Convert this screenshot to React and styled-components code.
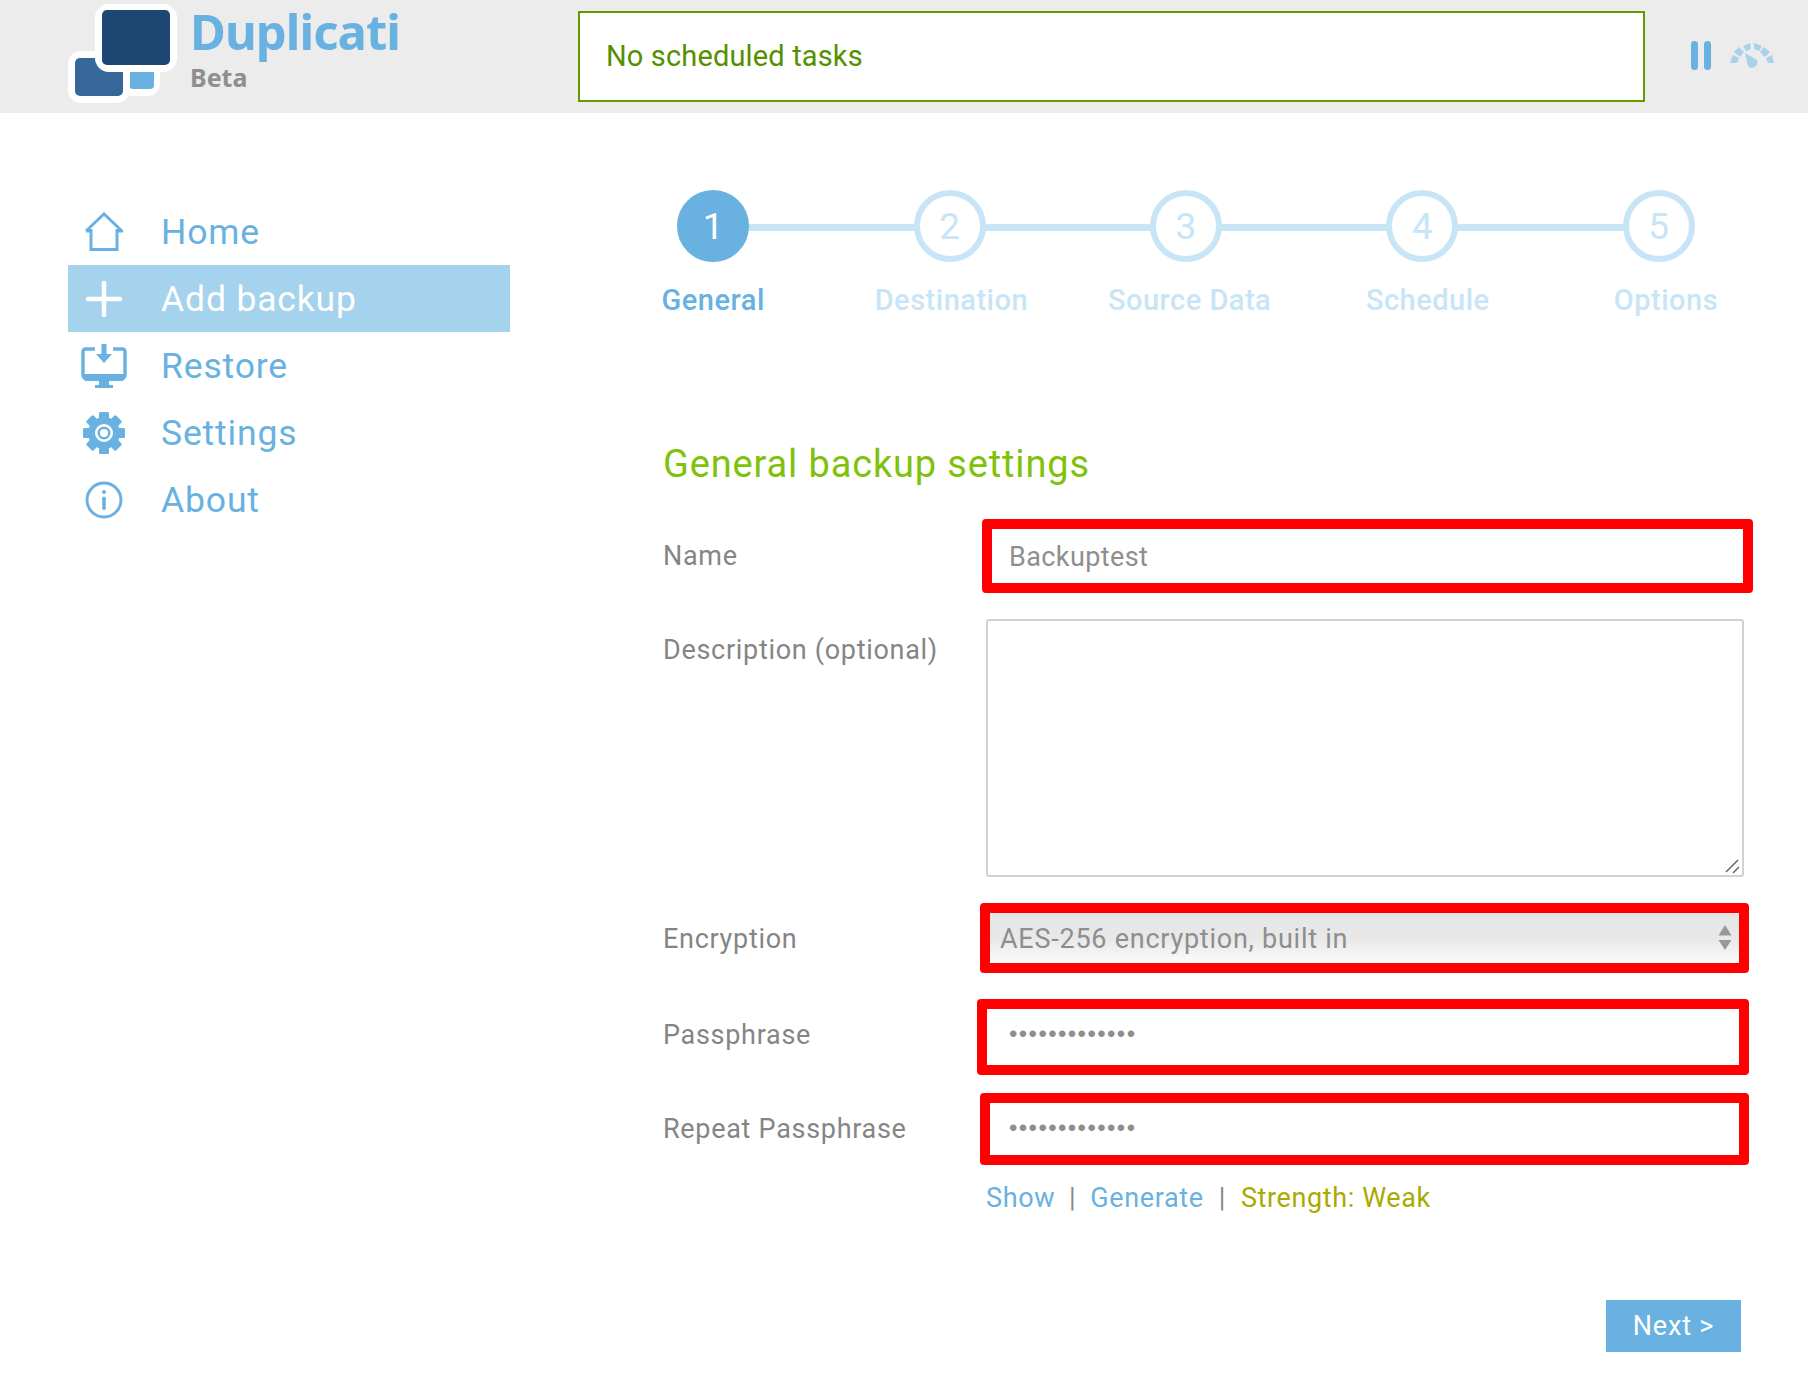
import React from 'react';
import styled, { createGlobalStyle } from 'styled-components';

const Global = createGlobalStyle`
  html, body { margin: 0; padding: 0; background: #fff; }
  body { font-family: Roboto, "Noto Sans", sans-serif; color: #888; }
`;
const Page = styled.div`width: 1808px; height: 1398px; overflow: hidden; display: flex; flex-direction: column;`;
const Header = styled.header`height: 113px; background: #ececec; display: flex; align-items: flex-start; flex: none;`;
const LogoWrap = styled.div`width: 578px; height: 113px; padding: 4px 0 0 68px; display: flex; align-items: flex-start; box-sizing: border-box;`;
const Brand = styled.div`margin-left: 13px; display: flex; flex-direction: column; font-family: "Noto Sans", sans-serif; font-weight: 700;`;
const BrandName = styled.div`font-size: 49px; line-height: 50px; margin-top: 2px; letter-spacing: -.95px; color: #68b1e0;`;
const BrandBeta = styled.div`font-size: 25px; line-height: 30px; margin-top: 6px; color: #8f8f8f;`;
const Status = styled.div`width: 1067px; height: 91px; margin-top: 11px; box-sizing: border-box; border: 2px solid #669900; background: #fff; color: #559000; font-size: 29px; letter-spacing: .15px; line-height: 86px; padding-left: 26px;`;
const Controls = styled.div`display: flex; align-items: center; height: 110px; margin-left: 46px; gap: 19px;`;
const Body = styled.div`flex: 1; display: flex;`;
const Nav = styled.nav`width: 442px; margin-left: 68px; padding-top: 85px; flex: none;`;
const NavItem = styled.a`height: 67px; display: flex; align-items: center; background: ${p => p.$active ? '#a5d2ec' : 'transparent'}; color: ${p => p.$active ? '#fff' : '#68b1e0'}; font-size: 35.5px; letter-spacing: .85px;`;
const NavIcon = styled.span`width: 72px; height: 67px; display: flex; align-items: center; justify-content: center; margin-right: 21px; flex: none;`;
const Main = styled.main`margin-left: 153px; width: 1100px; flex: none; padding-top: 77px;`;
const Steps = styled.div`display: flex; width: 1060px; margin-left: -68px;`;
const Step = styled.div`position: relative; width: 236.4px; flex: none; display: flex; flex-direction: column; align-items: center;`;
const Circle = styled.div`width: 72px; height: 72px; box-sizing: border-box; border-radius: 50%; border: 6px solid ${p => p.$active ? '#68b1e0' : '#c8e4f7'}; background: ${p => p.$active ? '#68b1e0' : '#fff'}; color: ${p => p.$active ? '#fff' : '#c8e4f7'}; font-size: 37px; font-weight: 400; display: flex; align-items: center; justify-content: center; z-index: 1;`;
const StepLine = styled.div`position: absolute; top: 34px; left: 150px; width: 170px; height: 7px; background: #c8e4f7;`;
const StepLabel = styled.div`margin: 20px 0 0 ${p => p.$shift}px; font-size: 29px; line-height: 36px; font-weight: 500; letter-spacing: .5px; white-space: nowrap; color: ${p => p.$active ? '#68b1e0' : '#c8e4f7'};`;
const Title = styled.h2`margin: 122px 0 0; font-size: 38px; line-height: 48px; font-weight: 400; letter-spacing: .85px; color: #7fc20c;`;
const Row = styled.div`display: flex; align-items: ${p => p.$top ? 'flex-start' : 'center'}; margin-top: ${p => p.$mt}px; height: ${p => p.$h}px;`;
const Label = styled.label`width: 319px; flex: none; margin-right: ${p => p.$gap}px; font-size: 27px; font-weight: 400; letter-spacing: .7px; color: #858585; padding-top: ${p => p.$pt || 0}px; margin-bottom: ${p => p.$mb || 0}px;`;
const Flagged = styled.div`box-sizing: border-box; width: ${p => p.$w}px; height: ${p => p.$h}px; border: 10px solid #ff0000; border-radius: 4px; background: ${p => p.$select ? 'linear-gradient(#e6e6e6, #e8e8e8 50%, #fbfbfb)' : '#fff'}; display: flex; align-items: center; justify-content: space-between; color: #8e8e8e; font-size: 27px; letter-spacing: .75px;`;
const Area = styled.div`position: relative; box-sizing: border-box; width: 758px; height: 258px; border: 2px solid #d2d2d2; border-radius: 3px; background: #fff;`;
const Grip = styled.svg`position: absolute; right: 1px; bottom: 1px;`;
const Dots = styled.span`display: block; font-size: 24px; line-height: 24px; letter-spacing: 1.4px; margin-bottom: ${p => p.$mb}px; color: #8e8e8e; font-family: "Liberation Sans", sans-serif;`;
const Links = styled.div`display: flex; margin: 15px 0 0 323px; font-size: 27px; letter-spacing: .62px; align-items: center; line-height: 36px;`;
const LinkText = styled.a`color: ${p => p.$warn ? '#aaaa00' : '#68b1e0'};`;
const Sep = styled.span`color: #888; margin: 0 ${p => p.$m || 14}px;`;
const Footer = styled.div`margin-top: 84px; margin-left: 943px;`;
const NextBtn = styled.button`width: 135px; height: 52px; border: 0; padding: 0; background: #68b1e0; color: #fff; font: 400 27px Roboto, sans-serif; letter-spacing: .8px;`;
const TextPad = styled.span`padding: ${p => p.$t || 0}px 0 0 ${p => p.$l}px; letter-spacing: ${p => p.$ls || '.75px'};`;

const Logo = () => (
  <svg width="109" height="100" viewBox="0 0 109 100">
    <rect x="50" y="56" width="42" height="36" rx="12" fill="#fff" />
    <rect x="61" y="56" width="25" height="29" rx="4" fill="#68b1e0" />
    <rect x="0" y="47" width="62" height="52" rx="13" fill="#fff" />
    <rect x="7" y="54" width="48" height="38" rx="5" fill="#356898" />
    <rect x="27" y="0" width="82" height="68" rx="14" fill="#fff" />
    <rect x="34" y="6" width="68" height="55" rx="5" fill="#1c4773" />
  </svg>
);
const Pause = () => (
  <svg width="20" height="29" viewBox="0 0 20 29"><rect x="0" y="0" width="7" height="29" rx="3.5" fill="#68b1e0" /><rect x="13" y="0" width="7" height="29" rx="3.5" fill="#68b1e0" /></svg>
);
const Gauge = () => (
  <svg width="45" height="25" viewBox="0 0 45 25" fill="#a9d2ea">
    <path d="M0 20 L7 20 L9 15 L3 12 Z" />
    <path d="M4 9 L10 14 L14 9 L9 4 Z" />
    <path d="M13 3 L16 8 L21 6 L20 0 Z" />
    <path d="M24 0 L24 6 L29 8 L32 3 Z" />
    <path d="M34 4 L30 9 L35 14 L40 9 Z" />
    <path d="M42 12 L36 15 L38 20 L44 20 Z" />
    <path d="M15 10 L27 17 A5.5 5.5 0 0 1 18 23 Z" />
  </svg>
);
const ic = { fill: 'none', stroke: '#68b1e0', strokeWidth: 3 };
const HomeIcon = () => <svg width="38" height="40" viewBox="0 0 38 40" {...ic}><path d="M1 19 L19 2 L37 19 H33 M5 19 H1 M6 17 V37.5 H32 V17" /></svg>;
const PlusIcon = () => <svg width="36" height="36" viewBox="0 0 36 36" stroke="#fff" strokeWidth="4.500" strokeLinecap="round"><path d="M18 2V34M2 18H34" /></svg>;
const RestoreIcon = () => (
  <svg width="46" height="44" viewBox="0 0 46 44"><path d="M14 5H4.500a2.500 2.500 0 0 0-2.500 2.500V31a4 4 0 0 0 4 4h34a4 4 0 0 0 4-4V7.500a2.500 2.500 0 0 0-2.500-2.500H32" fill="none" stroke="#68b1e0" strokeWidth="3.500" /><path d="M2 30H44V33a4 4 0 0 1-4 4H6a4 4 0 0 1-4-4Z M18 37H28V41H32V44H14V41H18Z" fill="#68b1e0" /><path d="M20.500 0H25.500V10H31L23 19L15 10H20.500Z" fill="#68b1e0" /></svg>
);
const GearIcon = () => (
  <svg width="42" height="42" viewBox="0 0 42 42">
    <g fill="#68b1e0">{[0, 45, 90, 135, 180, 225, 270, 315].map(a => <rect key={a} x="16" y="0" width="10" height="10" rx="1.500" transform={`rotate(${a} 21 21)`} />)}</g>
    <circle cx="21" cy="21" r="16" fill="#68b1e0" />
    <circle cx="21" cy="21" r="9" fill="#fff" />
    <circle cx="21" cy="21" r="6.500" fill="#68b1e0" />
    <circle cx="21" cy="21" r="4" fill="#fff" />
  </svg>
);
const InfoIcon = () => (
  <svg width="38" height="38" viewBox="0 0 38 38"><circle cx="19" cy="19" r="17" fill="none" stroke="#68b1e0" strokeWidth="3" /><circle cx="19" cy="11" r="2" fill="#68b1e0" /><rect x="17.200" y="15.500" width="3.600" height="13.500" rx="1.800" fill="#68b1e0" /></svg>
);
const Arrows = () => <svg width="14" height="26" viewBox="0 0 14 26" fill="#999" style={{ marginRight: 7 }}><path d="M7 0L13.500 10.500H.5Z M.5 15H13.500L7 25Z" /></svg>;

const navItems = [
  ['Home', <HomeIcon />], ['Add backup', <PlusIcon />, true], ['Restore', <RestoreIcon />], ['Settings', <GearIcon />], ['About', <InfoIcon />],
];
const steps = ['General', 'Destination', 'Source Data', 'Schedule', 'Options'];

export default function App() {
  return (
    <Page>
      <Global />
      <Header>
        <LogoWrap><Logo /><Brand><BrandName>Duplicati</BrandName><BrandBeta>Beta</BrandBeta></Brand></LogoWrap>
        <Status>No scheduled tasks</Status>
        <Controls><Pause /><Gauge /></Controls>
      </Header>
      <Body>
        <Nav>
          {navItems.map(([t, icon, active]) => <NavItem key={t} $active={active}><NavIcon>{icon}</NavIcon>{t}</NavItem>)}
        </Nav>
        <Main>
          <Steps>
            {steps.map((s, i) => (
              <Step key={s}>
                <Circle $active={i === 0}>{i + 1}</Circle>
                {i < 4 && <StepLine />}
                <StepLabel $active={i === 0} $shift={i * 3.6}>{s}</StepLabel>
              </Step>
            ))}
          </Steps>
          <Title>General backup settings</Title>
          <Row $mt={31} $h={74}><Label $gap={0} $mb={1}>Name</Label><Flagged $w={771} $h={74}><TextPad $l={17} $t={2} $ls=".4px">Backuptest</TextPad></Flagged></Row>
          <Row $top $mt={26} $h={258}><Label $gap={4} $pt={15}>Description (optional)</Label><Area><Grip width="16" height="16" viewBox="0 0 16 16" stroke="#666" strokeWidth="1.500"><path d="M1 14L13 2M8 15L14 9" /></Grip></Area></Row>
          <Row $mt={26} $h={70}><Label $gap={-2} $pt={2}>Encryption</Label><Flagged $w={769} $h={70} $select><TextPad $l={10} $t={2}>AES-256 encryption, built in</TextPad><Arrows /></Flagged></Row>
          <Row $mt={26} $h={76}><Label $gap={-5} $mb={4}>Passphrase</Label><Flagged $w={772} $h={76}><TextPad $l={22}><Dots $mb={6}>•••••••••••••</Dots></TextPad></Flagged></Row>
          <Row $mt={18} $h={72}><Label $gap={-2}>Repeat Passphrase</Label><Flagged $w={769} $h={72}><TextPad $l={19}><Dots $mb={2}>•••••••••••••</Dots></TextPad></Flagged></Row>
          <Links><LinkText>Show</LinkText><Sep>|</Sep><LinkText>Generate</LinkText><Sep $m={15}>|</Sep><LinkText $warn>Strength: Weak</LinkText></Links>
          <Footer><NextBtn>Next &gt;</NextBtn></Footer>
        </Main>
      </Body>
    </Page>
  );
}
